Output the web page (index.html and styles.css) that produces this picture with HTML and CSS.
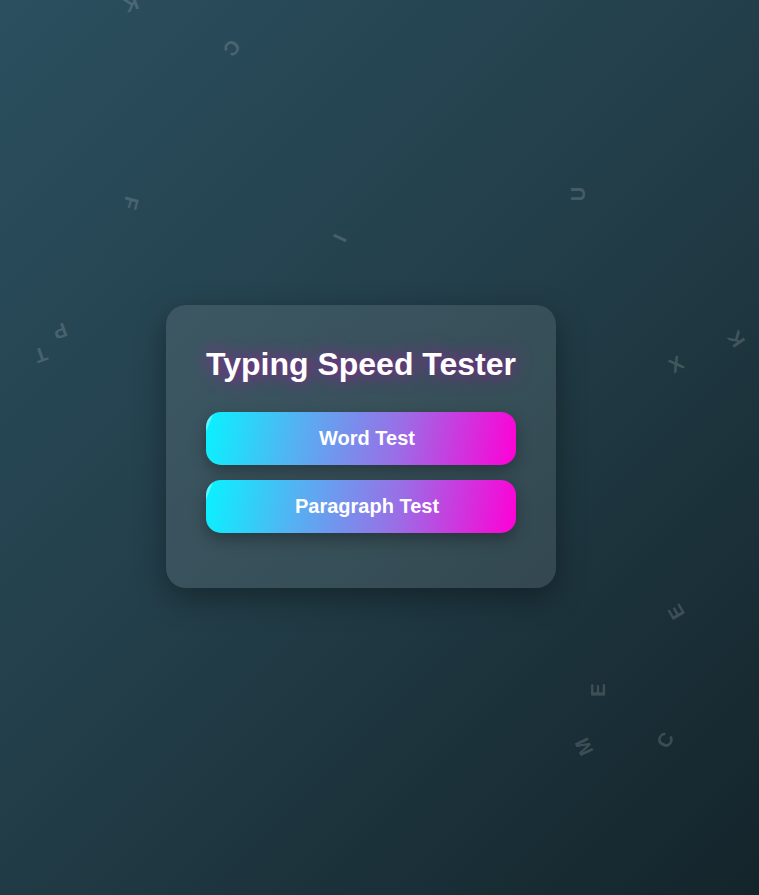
FILE: index.html
```html
<!DOCTYPE html>
<html lang="en">
<head>
<meta charset="utf-8">
<title>Typing Speed Tester</title>
<link rel="stylesheet" href="styles.css">
</head>
<body>
<div class="letters" aria-hidden="true">
  <span class="ltr l1">K</span>
  <span class="ltr l2">C</span>
  <span class="ltr l3">F</span>
  <span class="ltr l4">I</span>
  <span class="ltr l5">P</span>
  <span class="ltr l6">T</span>
  <span class="ltr l7">U</span>
  <span class="ltr l8">O</span>
  <span class="ltr l9">K</span>
  <span class="ltr l10">X</span>
  <span class="ltr l11">E</span>
  <span class="ltr l12">E</span>
  <span class="ltr l13">M</span>
  <span class="ltr l14">C</span>
</div>
<main class="stage">
  <section class="card">
    <h1 class="title">Typing Speed Tester</h1>
    <button class="btn">Word Test</button>
    <button class="btn">Paragraph Test</button>
  </section>
</main>
</body>
</html>
```
FILE: styles.css
```css
html, body {
  margin: 0;
  padding: 0;
  height: 100%;
}
body {
  font-family: "Liberation Sans", Arial, sans-serif;
  background: linear-gradient(135deg, #2b4f5f 0%, #223d48 50%, #14242b 100%);
  overflow: hidden;
  position: relative;
}
.letters {
  position: absolute;
  inset: 0;
  pointer-events: none;
}
.ltr {
  position: absolute;
  font-size: 20px;
  font-weight: bold;
  color: rgba(255, 255, 255, 0.17);
  line-height: 1;
  width: 24px;
  text-align: center;
  margin: -10px 0 0 -12px;
}
.l1 { left: 131px; top: 4px; transform: rotate(160deg); }
.l2 { left: 232px; top: 48px; transform: rotate(130deg); }
.l3 { left: 131px; top: 203px; transform: rotate(105deg); }
.l4 { left: 340px; top: 238px; transform: rotate(115deg); }
.l5 { left: 60px; top: 331px; transform: rotate(160deg); }
.l6 { left: 41px; top: 355px; transform: rotate(160deg); }
.l7 { left: 578px; top: 194px; transform: rotate(-90deg); }
.l8 { left: 766px; top: 148px; transform: rotate(-90deg); }
.l9 { left: 736px; top: 339px; transform: rotate(-125deg); }
.l10 { left: 676px; top: 364px; transform: rotate(-30deg); }
.l11 { left: 676px; top: 612px; transform: rotate(-120deg); }
.l12 { left: 598px; top: 690px; transform: rotate(-90deg); }
.l13 { left: 584px; top: 747px; transform: rotate(-115deg); }
.l14 { left: 665px; top: 740px; transform: rotate(-60deg); }

.stage {
  position: relative;
  min-height: 100%;
  display: flex;
  align-items: center;
  justify-content: center;
  padding-right: 37px;
  padding-bottom: 2px;
  box-sizing: border-box;
}
.card {
  width: 310px;
  padding: 40px;
  background: rgba(255, 255, 255, 0.1);
  border-radius: 20px;
  box-shadow: 0 10px 30px rgba(0, 0, 0, 0.35);
  display: flex;
  flex-direction: column;
}
.title {
  margin: 0 0 29px;
  font-size: 32px;
  line-height: 38px;
  font-weight: bold;
  color: #ffffff;
  text-align: center;
  white-space: nowrap;
  text-shadow: 0 0 18px rgba(210, 0, 200, 0.7);
}
.btn {
  position: relative;
  overflow: hidden;
  display: block;
  width: 310px;
  height: 53px;
  margin: 0 0 15px;
  padding: 0 0 0 12px;
  border: none;
  border-radius: 15px;
  background: linear-gradient(100deg, #08f3ff 0%, #56b0f2 30%, #9a6ee6 62%, #ff00d6 100%);
  color: #ffffff;
  font-family: "Liberation Sans", Arial, sans-serif;
  font-size: 20px;
  font-weight: bold;
  box-shadow: 0 6px 15px rgba(0, 0, 0, 0.3);
  cursor: pointer;
}
.btn::before {
  content: "";
  position: absolute;
  left: -20px;
  top: 0;
  width: 28px;
  height: 22px;
  background: rgba(255, 255, 255, 0.35);
  transform: skewX(-22deg);
  transform-origin: top left;
}
```
